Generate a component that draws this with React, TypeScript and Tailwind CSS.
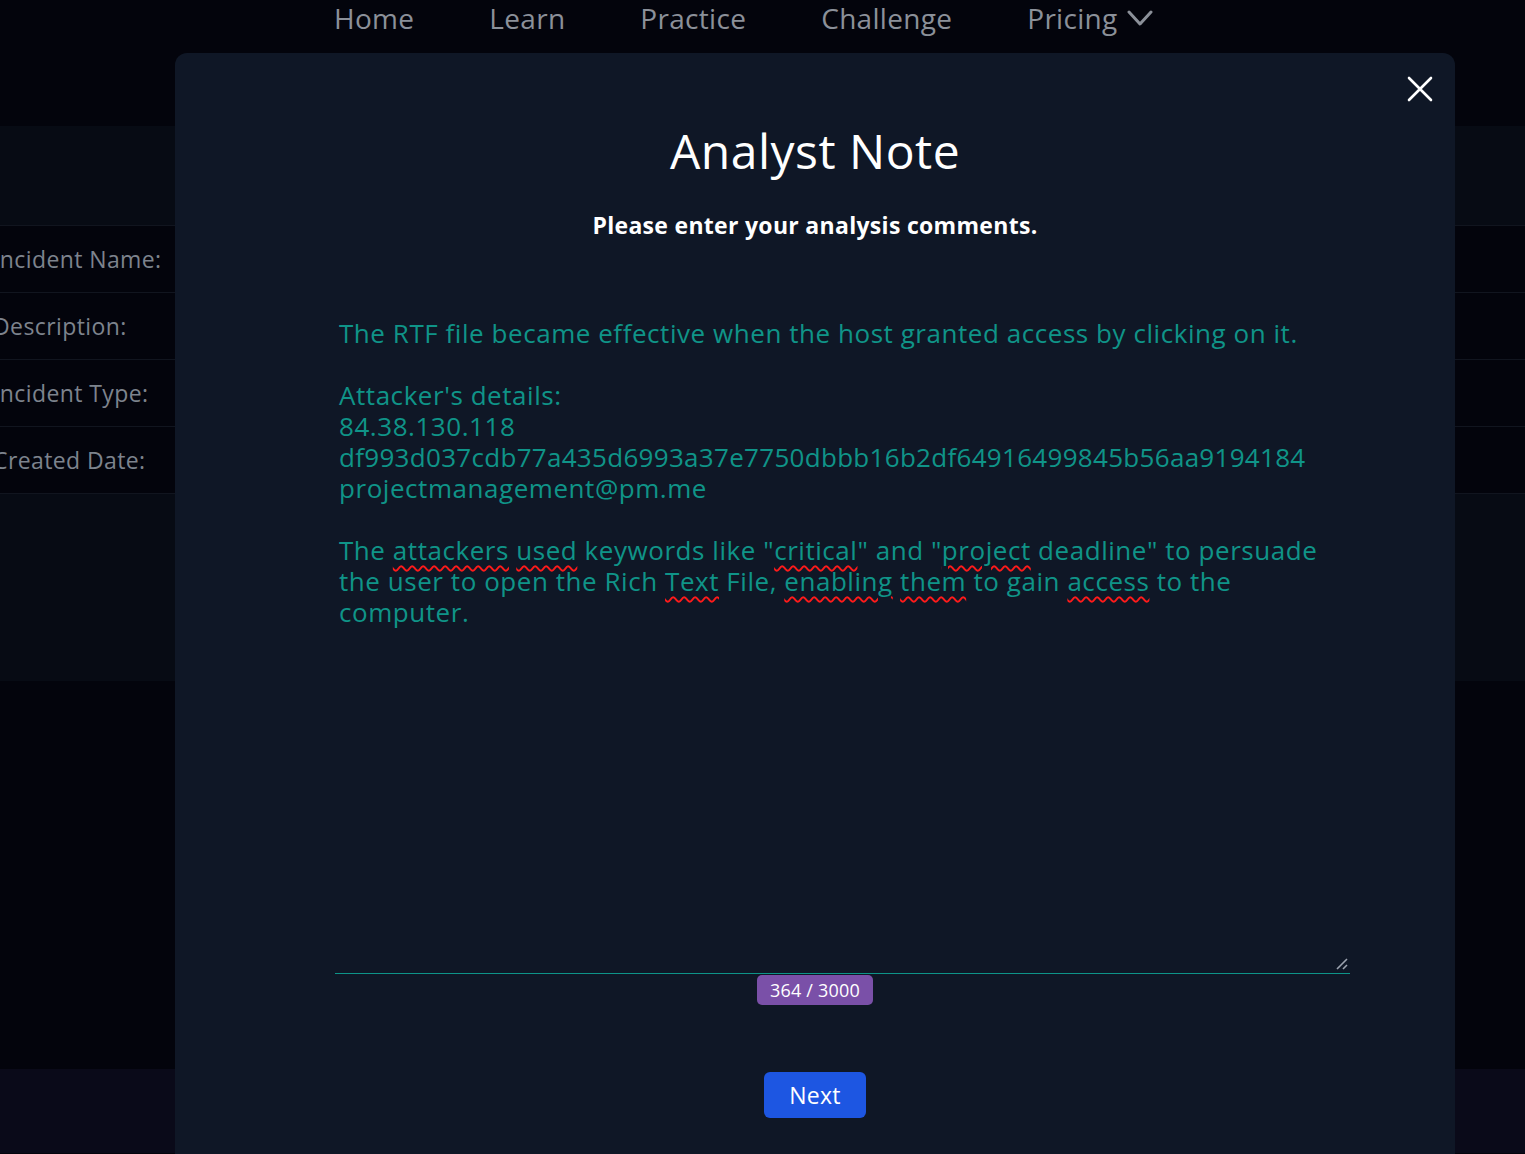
import React from "react";

const FONT = { fontFamily: '"Open Sans", "Liberation Sans", sans-serif' };

function Squiggle({ children }: { children: React.ReactNode }) {
  return (
    <span className="underline decoration-wavy decoration-[#ff1a1a] decoration-[1.5px] underline-offset-[5px]">
      {children}
    </span>
  );
}

function NavBar() {
  const items = ["Home", "Learn", "Practice", "Challenge"];
  return (
    <div className="h-[126px] bg-[#03040c]">
      <div className="flex items-start gap-[75px] pl-[334px] text-[28px] leading-[36px] tracking-[0.3px] text-[#8b9099]">
        {items.map((t) => (
          <span key={t}>{t}</span>
        ))}
        <span className="flex items-center gap-[9px]">
          Pricing
          <svg width="26" height="18" viewBox="0 0 26 18" fill="none">
            <path d="M2 3 L13 15 L24 3" stroke="#8b9099" strokeWidth="3" strokeLinecap="round" strokeLinejoin="round" />
          </svg>
        </span>
      </div>
    </div>
  );
}

function Backdrop() {
  const labels = ["Incident Name:", "Description:", "Incident Type:", "Created Date:"];
  return (
    <div className="flex flex-col">
      <NavBar />
      <div className="h-[99px] bg-[#070b14]" />
      {labels.map((l) => (
        <div
          key={l}
          className="flex h-[67px] items-center border-t border-[#11151f] bg-[#03040c] -ml-[7px] text-[23px] tracking-[0.4px] text-[#7d838d]"
        >
          {l}
        </div>
      ))}
      <div className="h-[188px] border-t border-[#11151f] bg-[#070b14]" />
      <div className="h-[388px] bg-[#03040c]" />
      <div className="h-[84px] bg-[#0a0a19]" />
    </div>
  );
}

function AnalystModal() {
  return (
    <div className="absolute left-[175px] top-[53px] h-[1120px] w-[1280px] rounded-xl bg-[#0f1726]">
      <div className="flex justify-end pr-[22px] pt-[23px]">
        <svg width="26" height="26" viewBox="0 0 26 26" fill="none">
          <path d="M2 2 L24 24 M24 2 L2 24" stroke="#ffffff" strokeWidth="2.6" strokeLinecap="round" />
        </svg>
      </div>
      <h2 className="mt-[21px] text-center text-[48px] leading-[56px] tracking-[0.5px] text-white">Analyst Note</h2>
      <p className="mt-[31px] text-center text-[23px] font-bold leading-[30px] tracking-[0.3px] text-white">
        Please enter your analysis comments.
      </p>

      {/* note field */}
      <div className="relative ml-[160px] mt-[58px] w-[1015px]">
        <div className="h-[675px] px-[4px] pt-[20px] text-[26px] leading-[31px] tracking-[0.55px] text-[#0f9488]">
          <div>The RTF file became effective when the host granted access by clicking on it.</div>
          <div>&nbsp;</div>
          <div>Attacker's details:</div>
          <div>84.38.130.118</div>
          <div className="tracking-[0.3px]">df993d037cdb77a435d6993a37e7750dbbb16b2df64916499845b56aa9194184</div>
          <div>projectmanagement@pm.me</div>
          <div>&nbsp;</div>
          <div className="whitespace-nowrap">
            The <Squiggle>attackers</Squiggle> <Squiggle>used</Squiggle> keywords like "<Squiggle>critical</Squiggle>" and "
            <Squiggle>project</Squiggle> deadline" to persuade
          </div>
          <div className="whitespace-nowrap">
            the user to open the Rich <Squiggle>Text</Squiggle> File, <Squiggle>enabling</Squiggle>{" "}
            <Squiggle>them</Squiggle> to gain <Squiggle>access</Squiggle> to the
          </div>
          <div>computer.</div>
        </div>
        <div className="h-px bg-[#0d9488]" />
        <svg className="absolute bottom-[3px] right-[1px]" width="14" height="14" viewBox="0 0 14 14" fill="none">
          <path d="M2 12 L12 2 M8 12 L12 8" stroke="#9ca3af" strokeWidth="1.6" />
        </svg>
      </div>

      <div className="flex justify-center">
        <span className="mt-[1px] rounded-[5px] bg-[#7a50a8] px-[13px] text-[18px] leading-[30px] tracking-[0.2px] text-white">
          364 / 3000
        </span>
      </div>

      <div className="mt-[67px] flex justify-center">
        <button className="h-[46px] w-[102px] rounded-[6px] bg-[#1d56e2] text-[23px] tracking-[0.3px] text-white">Next</button>
      </div>
    </div>
  );
}

export default function App() {
  return (
    <div className="relative h-[1154px] w-[1525px] overflow-hidden bg-[#03040c]" style={FONT}>
      <Backdrop />
      <AnalystModal />
    </div>
  );
}
